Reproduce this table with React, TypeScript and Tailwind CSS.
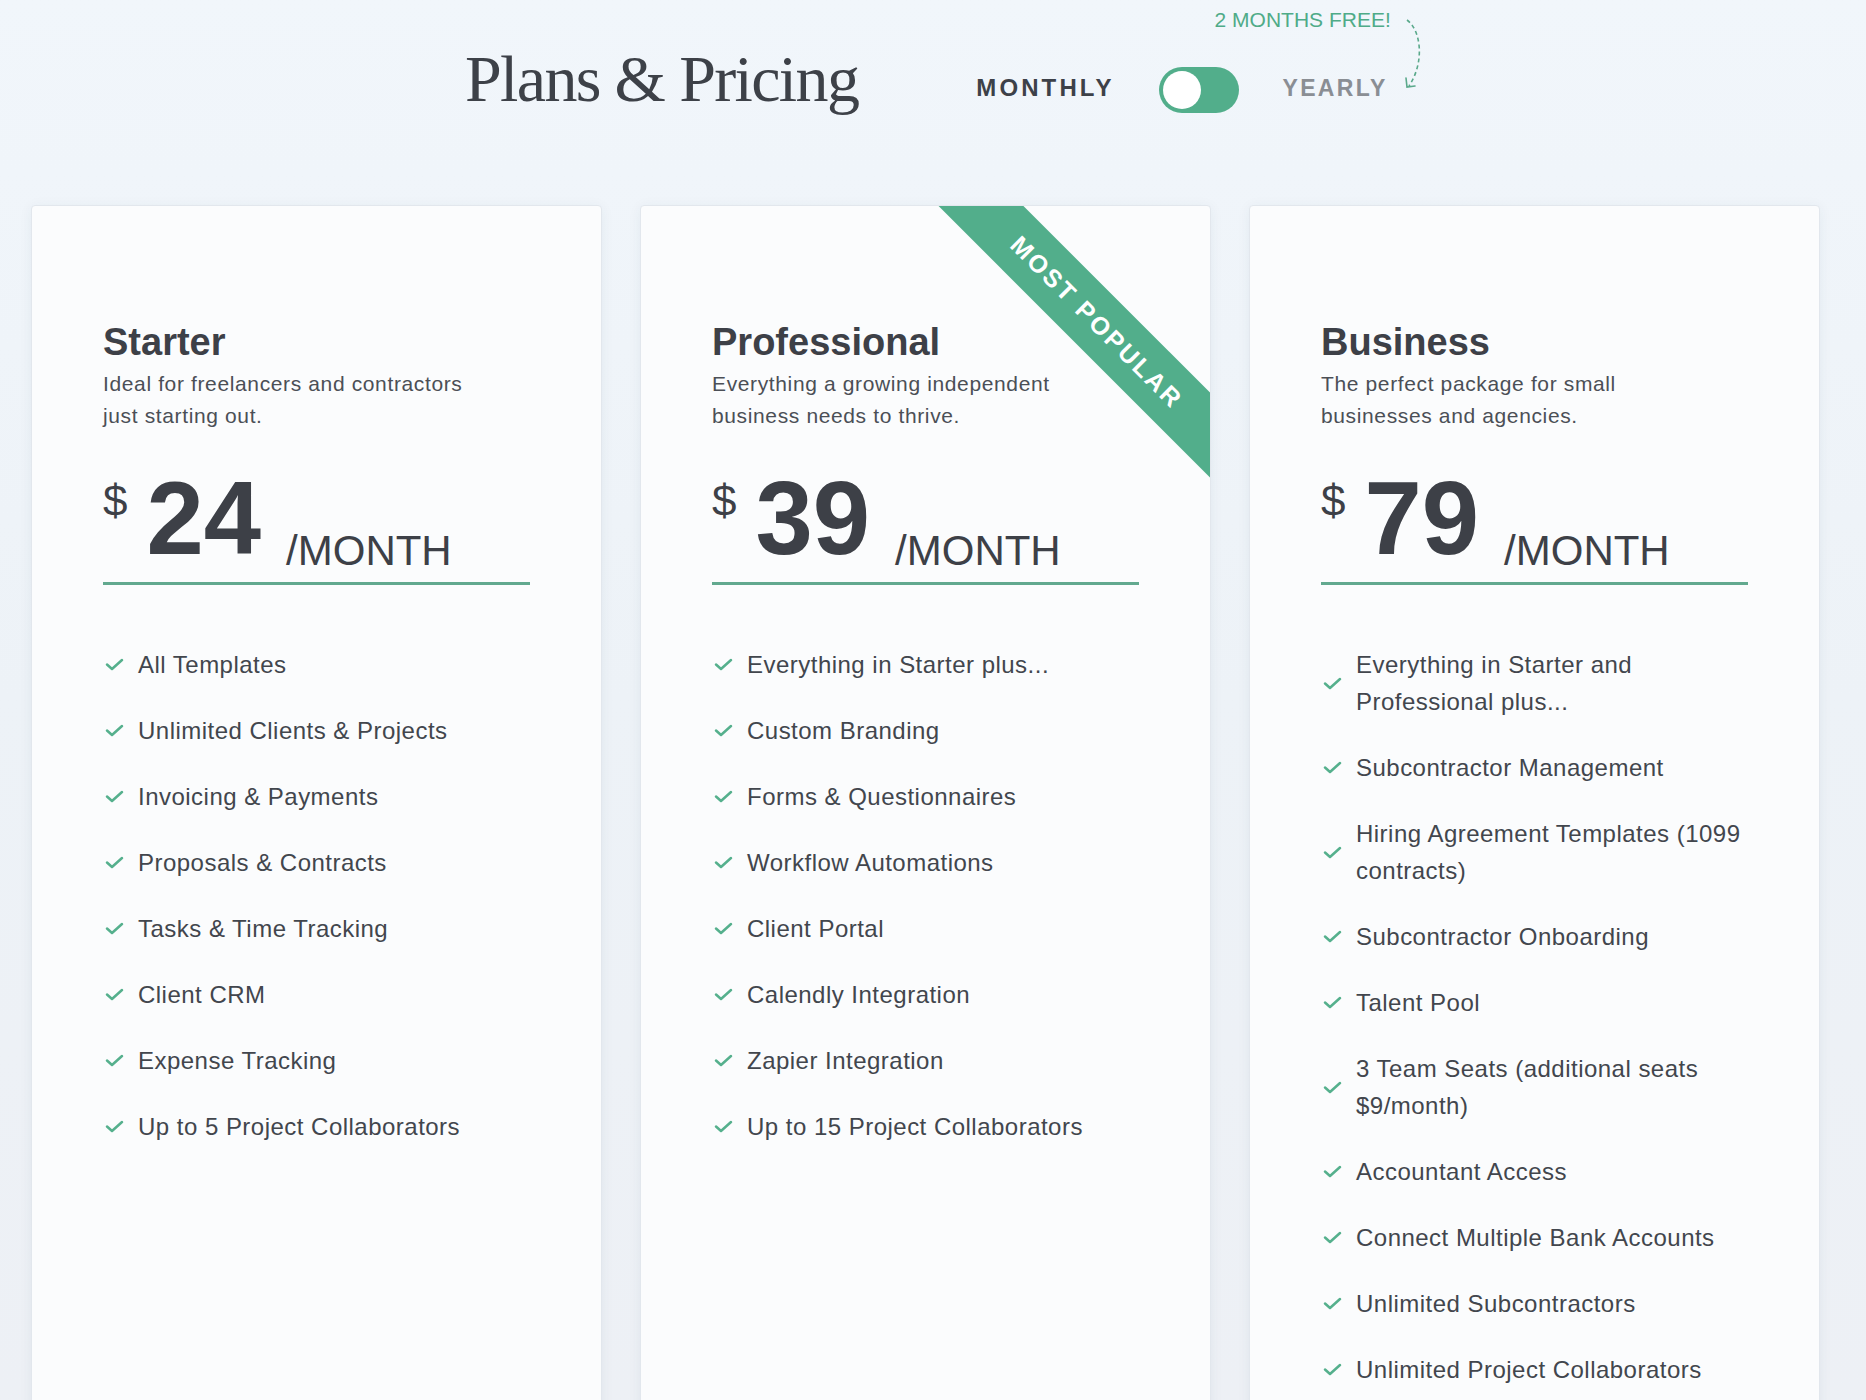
import React from 'react';

type Plan = {
  name: string;
  desc: string[];
  price: string;
  popular?: boolean;
  features: string[];
};

const plans: Plan[] = [
  {
    name: 'Starter',
    desc: ['Ideal for freelancers and contractors', 'just starting out.'],
    price: '24',
    features: [
      'All Templates',
      'Unlimited Clients & Projects',
      'Invoicing & Payments',
      'Proposals & Contracts',
      'Tasks & Time Tracking',
      'Client CRM',
      'Expense Tracking',
      'Up to 5 Project Collaborators',
    ],
  },
  {
    name: 'Professional',
    desc: ['Everything a growing independent', 'business needs to thrive.'],
    price: '39',
    popular: true,
    features: [
      'Everything in Starter plus...',
      'Custom Branding',
      'Forms & Questionnaires',
      'Workflow Automations',
      'Client Portal',
      'Calendly Integration',
      'Zapier Integration',
      'Up to 15 Project Collaborators',
    ],
  },
  {
    name: 'Business',
    desc: ['The perfect package for small', 'businesses and agencies.'],
    price: '79',
    features: [
      'Everything in Starter and Professional plus...',
      'Subcontractor Management',
      'Hiring Agreement Templates (1099 contracts)',
      'Subcontractor Onboarding',
      'Talent Pool',
      '3 Team Seats (additional seats $9/month)',
      'Accountant Access',
      'Connect Multiple Bank Accounts',
      'Unlimited Subcontractors',
      'Unlimited Project Collaborators',
    ],
  },
];

const CheckMark = () => (
  <svg width="19" height="13" viewBox="0 0 19 13" fill="none" className="shrink-0 ml-[2px]">
    <path d="M2 6.5 L7 11 L17 2" stroke="#55b08d" strokeWidth="2.5" strokeLinecap="round" strokeLinejoin="round" />
  </svg>
);

const PlanCard = ({ plan }: { plan: Plan }) => (
  <div className="relative overflow-hidden w-[571px] min-h-[1260px] bg-[#fbfcfd] border border-[#e2e7ed] rounded-[4px] shadow-[0_2px_14px_rgba(40,60,90,0.06)] px-[71px] pt-[117px]">
    {plan.popular && (
      <div className="absolute left-[206px] top-[86px] w-[500px] h-[60px] rotate-45 bg-[#52ae8b] flex items-center justify-center">
        <span className="text-white text-[25px] font-semibold tracking-[0.1em] leading-none">MOST POPULAR</span>
      </div>
    )}

    <h2 className="text-[38px] leading-none font-bold text-[#3d4047]">{plan.name}</h2>
    <p className="mt-[7px] text-[21px] leading-[32px] tracking-[0.03em] text-[#4b4f56]">
      {plan.desc[0]}
      <br />
      {plan.desc[1]}
    </p>

    <div className="mt-[37px] flex items-start pb-[10px] border-b-[3px] border-[#62a98f]">
      <span className="mt-[10px] text-[44px] leading-none text-[#3d4047]">$</span>
      <span className="ml-[19px] mt-[-2px] text-[103px] leading-none font-bold text-[#3d4047]">{plan.price}</span>
      <span className="ml-[25px] mt-[61px] text-[42px] leading-none text-[#3d4047]">/MONTH</span>
    </div>

    <ul className="mt-[61px] flex flex-col gap-[29px]">
      {plan.features.map((f) => (
        <li key={f} className="flex items-center gap-[14px]">
          <CheckMark />
          <span className="text-[24px] leading-[37px] tracking-[0.02em] text-[#42464d]">{f}</span>
        </li>
      ))}
    </ul>
  </div>
);

export default function App() {
  return (
    <div
      className="w-[1866px] h-[1400px] overflow-hidden bg-gradient-to-b from-[#f1f6fb] via-[#edf2f7] to-[#edf0f5]"
      style={{ fontFamily: '"Liberation Sans", Arial, sans-serif' }}
    >
      <header className="h-[205px] flex items-start pl-[465px]">
        <h1
          className="mt-[46px] text-[66px] leading-none tracking-[-0.025em] text-[#3d4148]"
          style={{ fontFamily: '"Liberation Serif", "Times New Roman", serif' }}
        >
          Plans &amp; Pricing
        </h1>

        <span className="ml-[118px] mt-[76px] text-[24px] leading-none font-bold tracking-[0.13em] text-[#3d4148]">
          MONTHLY
        </span>

        <div className="ml-[44px] mt-[67px] w-[80px] h-[46px] rounded-full bg-[#52ae8b] flex items-center px-[4px]">
          <div className="w-[38px] h-[38px] rounded-full bg-white" />
        </div>

        <div className="relative ml-[44px] mt-[77px]">
          <span className="text-[23px] leading-none font-bold tracking-[0.1em] text-[#8a8e94]">YEARLY</span>
          <span className="absolute left-[-68px] top-[-68px] whitespace-nowrap text-[21px] leading-none text-[#4fab88]">
            2 MONTHS FREE!
          </span>
          <svg className="absolute left-[116px] top-[-63px]" width="30" height="80" viewBox="0 0 30 80" fill="none">
            <path d="M8 6 C22 16 26 48 10 72" stroke="#5aa98b" strokeWidth="1.6" strokeDasharray="4 3" fill="none" />
            <path d="M7 64 L8 73 L16 72" stroke="#5aa98b" strokeWidth="1.6" fill="none" strokeLinecap="round" />
          </svg>
        </div>
      </header>

      <main className="flex gap-[38px] pl-[31px]">
        {plans.map((p) => (
          <PlanCard key={p.name} plan={p} />
        ))}
      </main>
    </div>
  );
}
